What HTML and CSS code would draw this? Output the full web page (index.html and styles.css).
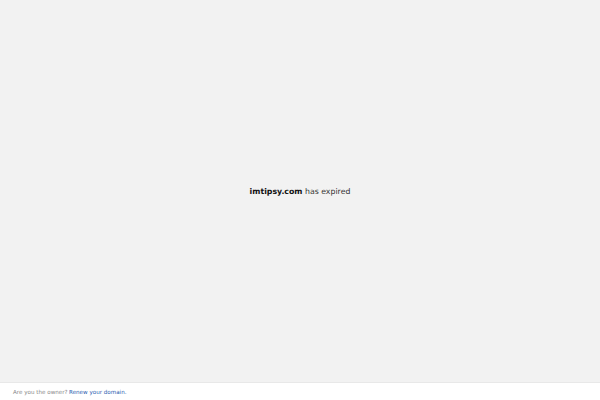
FILE: index.html
```html
<!DOCTYPE html>
<html>
<head>
<meta charset="utf-8">
<link rel="stylesheet" href="styles.css">
</head>
<body>
<main class="main">
  <p class="msg"><strong>imtipsy.com</strong> has expired</p>
</main>
<footer class="footer">
  <span class="owner">Are you the owner?</span> <a class="renew" href="#">Renew your domain.</a>
</footer>
</body>
</html>
```

FILE: styles.css
```css
html, body {
  margin: 0;
  padding: 0;
  height: 100%;
}
body {
  font-family: "DejaVu Sans", sans-serif;
  background: #f2f2f2;
  display: flex;
  flex-direction: column;
}
.main {
  flex: 1;
  display: flex;
  align-items: center;
  justify-content: center;
}
.msg {
  margin: 0;
  font-size: 7.8px;
  color: #333;
  padding-top: 1px;
}
.msg strong {
  color: #111;
}
.footer {
  height: 17px;
  background: #fff;
  border-top: 1px solid #e8e8e8;
  font-size: 5.6px;
  padding-left: 13px;
  display: flex;
  align-items: center;
  gap: 1.5px;
}
.owner {
  color: #888;
}
.renew {
  color: #2a5db0;
  text-decoration: none;
}
```
